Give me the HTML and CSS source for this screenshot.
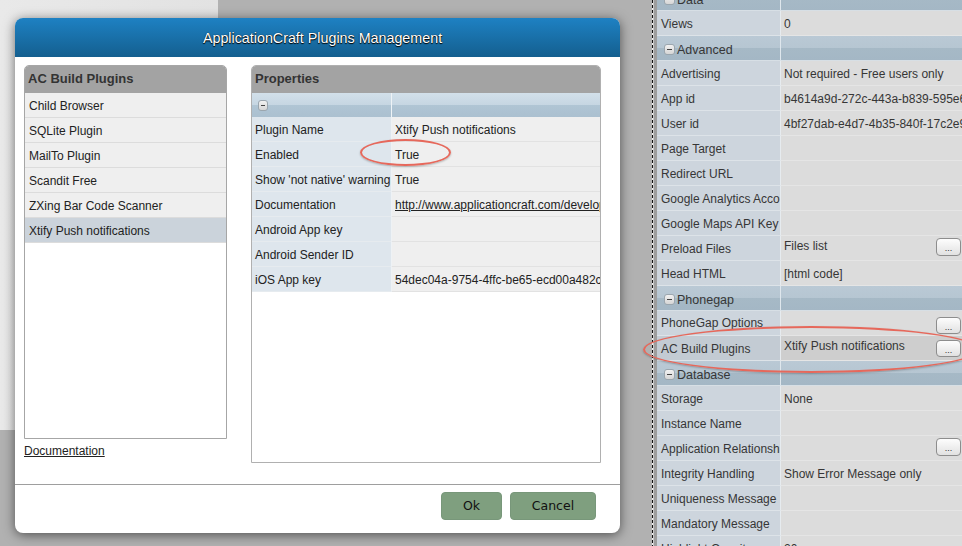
FILE: index.html
```html
<!DOCTYPE html>
<html>
<head>
<meta charset="utf-8">
<link rel="stylesheet" href="styles.css">
</head>
<body>
<div class="screen">
  <div class="backdrop"><div class="behind"></div></div>
  <div class="splitter"></div>
  <div class="strip"></div>
  <div class="grid">
    <div class="row group"><div class="lab"><span class="minus"></span>Data</div><div class="val"></div></div>
    <div class="row"><div class="lab">Views</div><div class="val">0</div></div>
    <div class="row group"><div class="lab"><span class="minus"></span>Advanced</div><div class="val"></div></div>
    <div class="row"><div class="lab">Advertising</div><div class="val">Not required - Free users only</div></div>
    <div class="row"><div class="lab">App id</div><div class="val">b4614a9d-272c-443a-b839-595e6c1a2b3d</div></div>
    <div class="row"><div class="lab">User id</div><div class="val">4bf27dab-e4d7-4b35-840f-17c2e9a0d4f1</div></div>
    <div class="row"><div class="lab">Page Target</div><div class="val"></div></div>
    <div class="row"><div class="lab">Redirect URL</div><div class="val"></div></div>
    <div class="row"><div class="lab">Google Analytics Account</div><div class="val"></div></div>
    <div class="row"><div class="lab">Google Maps API Key</div><div class="val"></div></div>
    <div class="row"><div class="lab">Preload Files</div><div class="val btnval"><span class="vtext">Files list</span><span class="dots">...</span></div></div>
    <div class="row"><div class="lab">Head HTML</div><div class="val">[html code]</div></div>
    <div class="row group"><div class="lab"><span class="minus"></span>Phonegap</div><div class="val"></div></div>
    <div class="row"><div class="lab lab-up">PhoneGap Options</div><div class="val btnval"><span class="vtext"></span><span class="dots dots-low">...</span></div></div>
    <div class="row sel"><div class="lab">AC Build Plugins</div><div class="val btnval"><span class="vtext">Xtify Push notifications</span><span class="dots dots-mid">...</span></div></div>
    <div class="row group"><div class="lab"><span class="minus"></span>Database</div><div class="val"></div></div>
    <div class="row"><div class="lab">Storage</div><div class="val">None</div></div>
    <div class="row"><div class="lab">Instance Name</div><div class="val"></div></div>
    <div class="row"><div class="lab">Application Relationships</div><div class="val btnval"><span class="vtext"></span><span class="dots">...</span></div></div>
    <div class="row"><div class="lab">Integrity Handling</div><div class="val">Show Error Message only</div></div>
    <div class="row"><div class="lab">Uniqueness Message</div><div class="val"></div></div>
    <div class="row"><div class="lab">Mandatory Message</div><div class="val"></div></div>
    <div class="row"><div class="lab">Highlight Opacity</div><div class="val">20</div></div>
  </div>

  <div class="dialog">
    <div class="dlg-head">ApplicationCraft Plugins Management</div>
    <div class="dlg-body">
      <div class="leftcol">
        <div class="panel plugins">
          <div class="panel-head">AC Build Plugins</div>
          <div class="list">
            <div class="item">Child Browser</div>
            <div class="item">SQLite Plugin</div>
            <div class="item">MailTo Plugin</div>
            <div class="item">Scandit Free</div>
            <div class="item">ZXing Bar Code Scanner</div>
            <div class="item selected">Xtify Push notifications</div>
          </div>
        </div>
        <a class="doclink">Documentation</a>
      </div>
      <div class="panel props">
        <div class="panel-head">Properties</div>
        <div class="ptable">
          <div class="prow pgroup"><div class="plab"><span class="minus"></span></div><div class="pval"></div></div>
          <div class="prow"><div class="plab">Plugin Name</div><div class="pval">Xtify Push notifications</div></div>
          <div class="prow"><div class="plab">Enabled</div><div class="pval">True</div></div>
          <div class="prow"><div class="plab">Show 'not native' warning</div><div class="pval">True</div></div>
          <div class="prow"><div class="plab">Documentation</div><div class="pval"><span class="ulink">http://www.applicationcraft.com/developers/plugins</span></div></div>
          <div class="prow"><div class="plab">Android App key</div><div class="pval"></div></div>
          <div class="prow"><div class="plab">Android Sender ID</div><div class="pval"></div></div>
          <div class="prow"><div class="plab">iOS App key</div><div class="pval">54dec04a-9754-4ffc-be65-ecd00a482c19</div></div>
        </div>
      </div>
    </div>
    <div class="dlg-foot">
      <div class="btn btn-ok">Ok</div>
      <div class="btn btn-cancel">Cancel</div>
    </div>
    <div class="ring ring-true"></div>
  </div>

  <div class="ring ring-side"></div>
</div>
</body>
</html>
```

FILE: styles.css
```css
* { box-sizing: border-box; }
html, body { margin: 0; padding: 0; }
body {
  font-family: "Liberation Sans", Arial, sans-serif;
  font-size: 12px;
  background: #b1b1b1;
}
.screen {
  position: relative;
  width: 962px;
  height: 546px;
  overflow: hidden;
  display: flex;
  background: #b1b1b1;
}
.backdrop {
  width: 652px;
  flex: none;
  background: #b1b1b1;
}
.behind {
  width: 218px;
  height: 430px;
  background: linear-gradient(to right, #e9e9e9, #e2e2e2);
}
.splitter {
  width: 1px;
  flex: none;
  background: repeating-linear-gradient(to bottom, #111 0 3px, #f2f2f2 3px 5px);
}
.strip {
  width: 4px;
  flex: none;
  background: #9d9d9d;
  border-left: 1px solid #c9c9c9;
}
.grid {
  width: 305px;
  flex: none;
  margin-top: -14px;
  color: #363636;
  background: #dcdcdc;
}
.row {
  display: grid;
  grid-template-columns: 124px 181px;
  height: 25px;
}
.lab, .val {
  white-space: nowrap;
  overflow: hidden;
  line-height: 24px;
  padding-top: 1px;
  height: 25px;
}
.lab {
  background: #cdd5dd;
  border-right: 1px solid #e6ebef;
  border-bottom: 1px solid #dde3e8;
  padding-left: 4px;
}
.lab-up { line-height: 22px; }
.val {
  background: #dcdcdc;
  border-bottom: 1px solid #e5e5e5;
  padding-left: 3px;
}
.row.sel .lab { background: #c3cbd3; }
.row.sel .val { background: #cecece; }
.btnval {
  display: flex;
  justify-content: space-between;
  align-items: flex-start;
  padding-right: 1px;
  padding-top: 0;
}
.vtext { line-height: 14px; padding-top: 3px; }
.dots {
  width: 25px;
  height: 18px;
  margin-top: 2px;
  border: 1px solid #8d8d8d;
  border-radius: 4px;
  background: linear-gradient(#fdfdfd, #e1e1e1);
  font-size: 9px;
  line-height: 18px;
  text-align: center;
  color: #333;
  flex: none;
}
.dots-low { margin-top: 6px; height: 17px; }
.dots-mid { margin-top: 4px; height: 17px; }
.row.group .lab, .row.group .val {
  background: linear-gradient(#bac9d5 0, #b6c6d2 50%, #a6b9c6 50%, #a4b7c5 100%);
  border-bottom: 1px solid #d7dfe5;
}
.row.group .lab {
  border-right: 1px solid #dfe7ed;
  padding-left: 7px;
  padding-top: 3px;
  display: flex;
  align-items: center;
  gap: 2px;
  font-size: 12.5px;
}
.minus {
  display: inline-block;
  width: 11px;
  height: 11px;
  border: 1px solid #9ba6ae;
  border-radius: 3px;
  background: linear-gradient(#f1f1f1, #d6d6d6);
  position: relative;
  flex: none;
}
.minus::after {
  content: "";
  position: absolute;
  left: 2px;
  right: 2px;
  top: 4px;
  height: 1px;
  background: #444;
}

/* dialog */
.dialog {
  position: absolute;
  left: 15px;
  top: 18px;
  width: 605px;
  height: 515px;
  background: #fff;
  border-radius: 8px;
  overflow: hidden;
  box-shadow: 0 2px 12px rgba(0, 0, 0, 0.55);
  color: #222;
}
.dlg-head {
  height: 39px;
  line-height: 39px;
  padding-top: 1px;
  background: linear-gradient(#1e81c3, #145f8f);
  color: #fff;
  font-size: 14.3px;
  text-align: center;
  padding-left: 10px;
  text-shadow: 0 0 1px #000, 0 1px 1px #000;
}
.dlg-body {
  height: 427px;
  display: flex;
  gap: 24px;
  padding: 8px 0 0 9px;
}
.leftcol {
  width: 203px;
  display: flex;
  flex-direction: column;
}
.panel {
  border: 1px solid #a6a6a6;
  border-radius: 5px 5px 0 0;
  overflow: hidden;
  background: #fff;
}
.panel-head {
  height: 27px;
  line-height: 26px;
  background: #a3a3a3;
  font-weight: bold;
  font-size: 13px;
  color: #333;
  padding-left: 3px;
}
.plugins { height: 374px; }
.item {
  height: 25px;
  line-height: 24px;
  padding-top: 1px;
  padding-left: 4px;
  background: #efefef;
  border-bottom: 1px solid #dcdcdc;
  color: #222;
}
.item.selected { background: #cbd3db; }
.doclink {
  margin-top: 5px;
  line-height: 15px;
  text-decoration: underline;
  color: #222;
}
.props {
  width: 350px;
  height: 398px;
  border-color: #b0b0b0;
}
.prow {
  display: grid;
  grid-template-columns: 140px 1fr;
  height: 25px;
}
.plab, .pval {
  height: 25px;
  line-height: 24px;
  padding-top: 1px;
  white-space: nowrap;
  overflow: hidden;
}
.plab {
  background: #dee6ed;
  border-right: 1px solid #eef2f5;
  border-bottom: 1px solid #e6ebef;
  padding-left: 3px;
}
.pval {
  background: #efefef;
  border-bottom: 1px solid #e2e2e2;
  padding-left: 3px;
}
.ulink { text-decoration: underline; }
.prow.pgroup { height: 24px; }
.prow.pgroup .plab, .prow.pgroup .pval {
  height: 24px;
  padding-top: 0;
  background: linear-gradient(#d2e0ea 0, #c6d6e2 50%, #b0c5d4 50%, #abc0d0 100%);
  border-bottom: none;
}
.prow.pgroup .plab {
  border-right: 1px solid #eef3f6;
  padding-left: 6px;
  display: flex;
  align-items: center;
}
.prow.pgroup .minus { width: 10px; height: 11px; margin-top: 1px; }
.dlg-foot {
  height: 49px;
  border-top: 1px solid #9e9e9e;
  display: flex;
  justify-content: flex-end;
  gap: 8px;
  padding: 7px 24px 0 0;
}
.btn {
  height: 28px;
  line-height: 26px;
  background: #7f9f7f;
  border: 1px solid #78977a;
  border-radius: 4px;
  text-align: center;
  font-family: "DejaVu Sans", Verdana, sans-serif;
  font-size: 12.5px;
  color: #111;
}
.btn-ok { width: 61px; }
.btn-cancel { width: 86px; }

.ring {
  position: absolute;
  border: 2px solid #e6685b;
  border-radius: 50%;
  box-shadow: 0 1px 2px rgba(0, 0, 0, 0.25);
  pointer-events: none;
}
.ring-true {
  left: 345px;
  top: 121px;
  width: 91px;
  height: 27px;
}
.ring-side {
  left: 643px;
  top: 326px;
  width: 336px;
  height: 47px;
}
```
